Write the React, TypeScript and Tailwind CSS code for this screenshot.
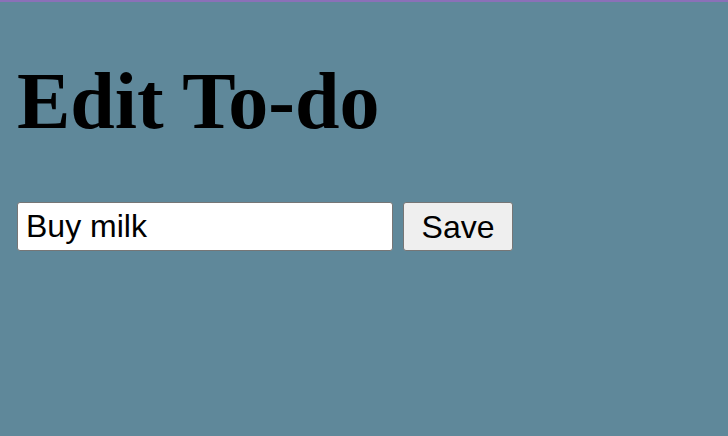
import React from 'react'

export default function App() {
  return (
    <div className="min-h-screen border-t-2 border-[#8b70b8] bg-[#5f889a] px-[17px]">
      <h1 className="pt-[56px] font-['Liberation_Serif',serif] text-[80px] font-bold leading-[86px] text-black">
        Edit To-do
      </h1>
      <form className="mt-[58px] flex items-center gap-[10px]" onSubmit={(e) => e.preventDefault()}>
        <input
          defaultValue="Buy milk"
          className="h-[49px] w-[376px] rounded-[3px] border border-[#767676] bg-white px-[8px] font-['Liberation_Sans',sans-serif] text-[32px] text-black outline-none"
        />
        <button
          type="submit"
          className="h-[49px] w-[110px] rounded-[3px] border border-[#767676] bg-[#efefef] font-['Liberation_Sans',sans-serif] text-[32px] text-black"
        >
          Save
        </button>
      </form>
    </div>
  )
}
